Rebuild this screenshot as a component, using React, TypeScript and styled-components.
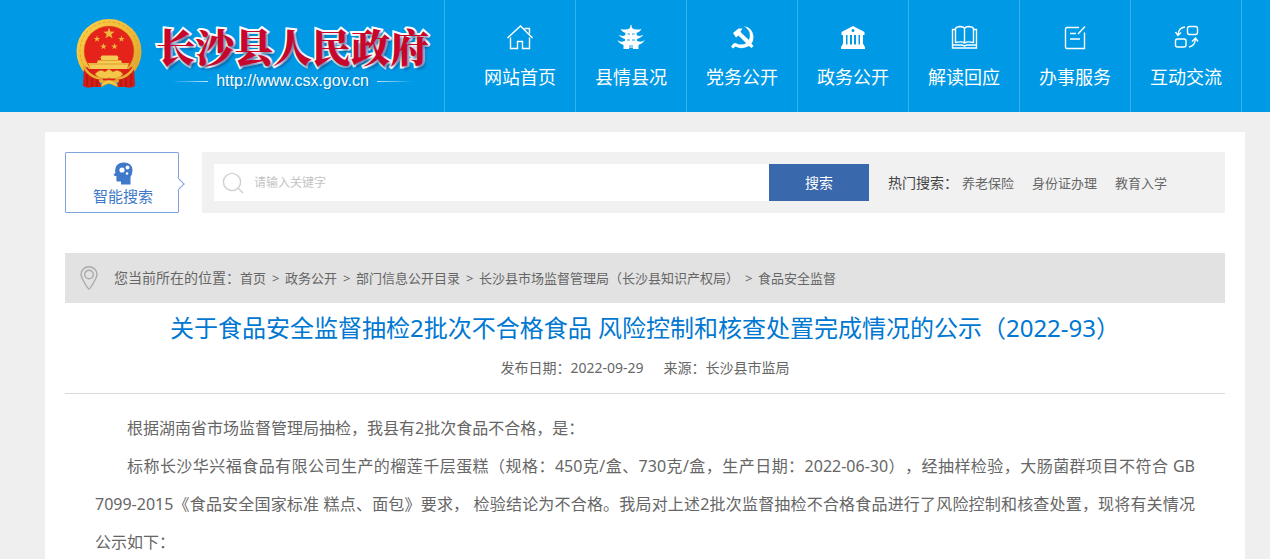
import React from "react";
import styled, { createGlobalStyle } from "styled-components";

const GlobalStyle = createGlobalStyle`
  *, *::before, *::after { box-sizing: border-box; }
  body {
    margin: 0;
    background: #efefef;
    color: #666;
    font: 14px/20px "Noto Sans", "Noto Sans CJK SC", sans-serif;
    text-spacing-trim: space-all;
  }
  a { color: inherit; text-decoration: none; }
`;

const Header = styled.header`
  display: flex;
  justify-content: space-between;
  height: 112px;
  padding: 0 28px 0 75px;
  background: #0099e5;
  color: #fff;
`;

const Brand = styled.a`
  display: flex;
  align-items: flex-start;
  gap: 14px;
  padding-top: 18px;
  white-space: nowrap;
`;

const BrandText = styled.span`
  display: flex;
  flex-direction: column;
  align-items: center;
`;

const SiteName = styled.span`
  color: #c8062c;
  font: 900 39px/54px "Noto Serif CJK SC", "Noto Sans CJK SC", serif;
  -webkit-text-stroke: 4px #fff;
  paint-order: stroke fill;
  text-shadow: 2px 3px 3px rgba(0, 50, 110, 0.6);
`;

const SiteUrl = styled.span`
  display: flex;
  align-items: center;
  gap: 8px;
  font: 16px/18px "Liberation Sans", sans-serif;
  text-shadow: 1px 1px 1px rgba(0, 60, 120, 0.4);
`;

const Rule = styled.i<{ $toRight?: boolean }>`
  width: 36px;
  height: 1px;
  background: linear-gradient(
    ${(p) => (p.$toRight ? "to left" : "to right")},
    transparent,
    rgba(255, 255, 255, 0.75)
  );
`;

const Nav = styled.nav`
  display: flex;
  padding-left: 20px;
  border-left: 1px solid #37afeb;
`;

const NavItem = styled.a`
  display: flex;
  flex-direction: column;
  align-items: center;
  gap: 13px;
  width: 111px;
  padding-top: 23px;
  border-right: 1px solid #37afeb;
  font-size: 18px;
  line-height: 26px;
`;

const NavIcon = styled.svg`
  width: 28px;
  height: 28px;
  fill: none;
  stroke: #fff;
  stroke-width: 1.4;
`;

const Panel = styled.main`
  margin: 20px 25px 0 45px;
  padding: 20px 20px 0;
  background: #fff;
`;

const SearchRow = styled.section`
  display: flex;
  gap: 23px;
  height: 61px;
  margin-bottom: 40px;
`;

const SmartSearch = styled.a`
  position: relative;
  display: flex;
  flex-direction: column;
  align-items: center;
  width: 114px;
  padding: 9px 0 0 2px;
  border: 1px solid #7fa3dc;
  border-radius: 1px;
  color: #4079ca;
  font-size: 15px;
  line-height: 22px;

  &::after {
    content: "";
    position: absolute;
    top: 27px;
    right: -5px;
    width: 8px;
    height: 8px;
    border: solid #7fa3dc;
    border-width: 1px 1px 0 0;
    background: #fff;
    transform: rotate(45deg);
  }
`;

const SearchBar = styled.form`
  display: flex;
  flex: 1;
  align-items: center;
  padding: 12px;
  background: #f1f1f1;
  white-space: nowrap;
`;

const Field = styled.label`
  display: flex;
  flex: 0 1 555px;
  align-items: center;
  gap: 10px;
  height: 37px;
  padding-left: 8px;
  background: #fff;
`;

const Keyword = styled.input`
  flex: 1;
  min-width: 0;
  padding: 0;
  border: 0;
  outline: 0;
  background: none;
  font: 12px/20px "Noto Sans", "Noto Sans CJK SC", sans-serif;
  &::placeholder { color: #c4c4c4; }
`;

const SearchButton = styled.button`
  width: 100px;
  height: 37px;
  border: 0;
  background: #3968ac;
  color: #fff;
  font: 14px/20px "Noto Sans", "Noto Sans CJK SC", sans-serif;
`;

const HotLabel = styled.span`
  margin: 0 4px 0 19px;
  color: #444;
`;

const HotLinks = styled.span`
  display: flex;
  gap: 18px;
  font-size: 13px;
`;

const Breadcrumb = styled.nav`
  display: flex;
  align-items: center;
  height: 50px;
  padding-left: 15px;
  background: #e2e2e2;
  white-space: nowrap;
`;

const CrumbLabel = styled.span`
  margin-left: 16px;
`;

const Crumbs = styled.span`
  display: flex;
  gap: 6px;
  font-size: 13px;
`;

const Separator = styled.span`
  width: 7px;
`;

const Title = styled.h1`
  margin: 0;
  color: #0078d2;
  font-size: 24px;
  font-weight: 400;
  line-height: 50px;
  text-align: center;
`;

const Meta = styled.div`
  display: flex;
  justify-content: center;
  gap: 20px;
  padding: 5px 0 15px;
  border-bottom: 1px solid #dadada;
`;

const Article = styled.article`
  padding: 15px 30px 0;
  font-size: 16px;
  line-height: 38px;
  text-align: justify;

  p {
    margin: 0;
    text-indent: 2em;
  }
`;

const starPath = (cx: number, cy: number, r: number) =>
  Array.from({ length: 10 }, (_, i) => {
    const a = -Math.PI / 2 + (i * Math.PI) / 5;
    const d = i % 2 ? r * 0.4 : r;
    return `${(cx + d * Math.cos(a)).toFixed(2)},${(cy + d * Math.sin(a)).toFixed(2)}`;
  }).join(" ");

const Emblem = () => (
  <svg width="67" height="71" viewBox="0 0 67 71" aria-hidden="true">
    <defs>
      <linearGradient id="gold" x1="0" y1="0" x2="1" y2="1">
        <stop offset="0" stopColor="#ffd24f" />
        <stop offset="0.5" stopColor="#f0bb38" />
        <stop offset="1" stopColor="#d9a02a" />
      </linearGradient>
    </defs>
    <circle cx="34" cy="33.500" r="32.500" fill="url(#gold)" />
    <circle cx="34" cy="33" r="29" fill="none" stroke="#dfa428" strokeWidth="1" strokeDasharray="3 2" />
    <circle cx="34" cy="33" r="25" fill="#e5231b" stroke="#c98012" strokeWidth="0.500" />
    <g fill="#eeb93c">
      <polygon points={starPath(34, 15.5, 6)} />
      <polygon points={starPath(22, 21, 3.4)} />
      <polygon points={starPath(46.5, 21, 3.4)} />
      <polygon points={starPath(28.5, 28.5, 3.4)} />
      <polygon points={starPath(39.5, 28.5, 3.4)} />
    </g>
    <path d="M27 37.500 H42 L44 40 H43 V42 H46 L47 45 H54 L52 51 H16 L13 45 H22 L23 42 H26 V40 H25Z" fill="#f6cb55" />
    <path d="M23 42.500 H46 M15 46 H53" stroke="#d9911f" strokeWidth="0.800" />
    <path d="M14 51 H54 Q50 62 34 63 Q18 62 14 51Z" fill="#df1f18" />
    <path d="M9 49 Q12 48 15 52 Q19 57 26 58 L24 63 L27 69 H17 Q13 71 8 68Z M59 49 Q56 48 53 52 Q49 57 42 58 L44 63 L41 69 H51 Q55 71 60 68Z" fill="#d51d17" />
    <path d="M12 53 V68 M17 57 V69 M22 60 V69 M56 53 V68 M51 57 V69 M46 60 V69" stroke="#a31311" strokeWidth="1" />
    <path d="M8 45 Q15 59 27 59 L28 62 Q15 62 8 50Z M60 45 Q53 59 41 59 L40 62 Q53 62 60 50Z" fill="#e8ae34" />
    <path d="M20 56 Q25 50 30 54 L34 51 L38 54 Q43 50 48 56 Q43 62 34 60 Q25 62 20 56Z M26 69 Q26 63 34 62 Q42 63 43 69 L38 67 Q34 64 30 67Z" fill="#f5c64a" stroke="#cf8a1c" strokeWidth="0.500" />
  </svg>
);

const icons: Record<string, React.ReactNode> = {
  home: (
    <path d="M1.500 15 L14.500 3 L26.500 15 M18.500 5.500 H23.500 V10.500 M4.500 14.500 V25.500 H11.500 V18.500 H16.500 V25.500 H23.500 V14.500" />
  ),
  pagoda: (
    <g fill="#fff" stroke="none">
      <path d="M13.600 2 H14.400 L15 5 Q18 7.500 24.500 6 Q22.500 9.500 19 10 H9 Q5.500 9.500 3.500 6 Q10 7.500 13 5Z" />
      <path d="M8.500 12 H19.500 Q23 14 26.500 11.500 Q24.500 15 20.500 16 H7.500 Q3.500 15 1.500 11.500 Q5 14 8.500 12Z" />
      <path d="M7.500 18 H20.500 Q24 20 28 17 Q26 20.500 21.500 22 H6.500 Q2 20.500 0 17 Q4 20 7.500 18Z" />
      <path d="M8.500 10 H19.500 V12 H8.500Z M8 16 H20 V18 H8Z M12 22 H16 V25 H12Z" opacity="0.550" />
      <path d="M8.500 10 H10.500 V12 H8.500Z M13 10 H15 V12 H13Z M17.500 10 H19.500 V12 H17.500Z M8 16 H10 V18 H8Z M13 16 H15 V18 H13Z M18 16 H20 V18 H18Z M6.500 22 H12 V26 H6.500Z M16 22 H21.500 V26 H16Z" />
    </g>
  ),
  party: (
    <g fill="#fff" stroke="none">
      <path d="M15.500 3 Q25 4.500 25.500 13.500 Q25.500 18 23.500 20.500 L25.500 23 L23.500 25 L21 23 Q14 27 7.500 23.500 L5 25.500 L3 23.500 L5.500 20.500 L7.500 20 Q13 23 18.500 20 Q23 16 21.500 9.500 Q20 5.500 15.500 3Z" />
      <path d="M5 10 L10.500 5.500 H14.500 L12.500 8.500 L13.500 10 L22.500 18.500 L19.500 21.500 L10.500 12.500 L8 14.500Z" />
    </g>
  ),
  bank: (
    <g fill="#fff" stroke="none">
      <path fillRule="evenodd" d="M14 3 L25.500 9 V12 H2.500 V9Z M14 6 A1.500 1.500 0 1 0 14 9 A1.500 1.500 0 1 0 14 6Z" />
      <path d="M4 12 H7 V22 H4Z M8.500 12 H11 V22 H8.500Z M13 12 H15 V22 H13Z M17 12 H19.500 V22 H17Z M21 12 H24 V22 H21Z M3 21.500 H25 V23 L26 23.500 V26 H2 V23.500 L3 23Z" />
    </g>
  ),
  book: (
    <>
      <path d="M5.500 20 V6 Q5.500 4 10 3.500 Q14 3.500 14.500 6 Q15 3.500 19 3.500 Q23.500 4 23.500 6 V20 M14.500 6 V19 M5.500 19.500 Q12 18 14.500 20 Q17 18 23.500 19.500" />
      <path d="M5 6.500 H2.500 V25 H26.500 V6.500 H24 M3 22 H12 L14.500 23 L17 22 H26" />
    </>
  ),
  form: (
    <path d="M18 4.500 H6 Q4.500 4.500 4.500 6 V24 Q4.500 25.500 6 25.500 H23.500 V9.500 M24 3.500 L17 11 M9 10.500 H15 M9 16 H19" />
  ),
  exchange: (
    <>
      <rect x="15.500" y="3.500" width="10" height="8" rx="2" />
      <rect x="3.500" y="16" width="10.500" height="8" rx="2" />
      <path d="M13 4 Q6.500 4.500 6 12 M3.500 9 L6 12.500 L9 9.500 M17 24 Q23 23 23.500 15.500 M20 18.500 L23.500 15 L26 18.500" />
    </>
  ),
};

const sections = [
  ["home", "网站首页"],
  ["pagoda", "县情县况"],
  ["party", "党务公开"],
  ["bank", "政务公开"],
  ["book", "解读回应"],
  ["form", "办事服务"],
  ["exchange", "互动交流"],
];

const hotWords = ["养老保险", "身份证办理", "教育入学"];

const trail = ["首页", "政务公开", "部门信息公开目录", "长沙县市场监督管理局（长沙县知识产权局）", "食品安全监督"];

export default function App() {
  return (
    <>
      <GlobalStyle />
      <Header>
        <Brand href="#">
          <Emblem />
          <BrandText>
            <SiteName>长沙县人民政府</SiteName>
            <SiteUrl>
              <Rule />
              http://www.csx.gov.cn
              <Rule $toRight />
            </SiteUrl>
          </BrandText>
        </Brand>
        <Nav>
          {sections.map(([icon, label]) => (
            <NavItem key={label} href="#">
              <NavIcon viewBox="0 0 28 28" aria-hidden="true">{icons[icon]}</NavIcon>
              {label}
            </NavItem>
          ))}
        </Nav>
      </Header>

      <Panel>
        <SearchRow>
          <SmartSearch href="#">
            <svg width="20" height="23" viewBox="0 0 20 23" aria-hidden="true">
              <path d="M2 9 Q2 1 10 0.500 Q19 0 19.500 8 Q19.500 12 17.500 15 V22.500 H8 V19.500 H4 Q3 19 3.500 14 H2 L0.500 13 L2.500 10.500Z" fill="#4079ca" />
              <circle cx="9" cy="8" r="2.600" fill="#fff" />
              <circle cx="14.500" cy="5.500" r="1.900" fill="#fff" />
              <circle cx="14" cy="11.500" r="1.300" fill="#fff" />
            </svg>
            智能搜索
          </SmartSearch>
          <SearchBar onSubmit={(e) => e.preventDefault()}>
            <Field>
              <svg width="22" height="22" viewBox="0 0 22 22" fill="none" stroke="#d0d0d0" strokeWidth="1.400" aria-hidden="true">
                <circle cx="10" cy="10" r="8.600" />
                <path d="M16 16 L21 21" />
              </svg>
              <Keyword type="text" placeholder="请输入关键字" aria-label="请输入关键字" />
            </Field>
            <SearchButton type="submit">搜索</SearchButton>
            <HotLabel>热门搜索：</HotLabel>
            <HotLinks>
              {hotWords.map((word) => (
                <a key={word} href="#">{word}</a>
              ))}
            </HotLinks>
          </SearchBar>
        </SearchRow>

        <Breadcrumb>
          <svg width="18" height="24" viewBox="0 0 18 24" fill="none" stroke="#aaa" strokeWidth="1.400" aria-hidden="true">
            <path d="M9 23 Q7.500 22.500 3 14 Q1 10.500 1 8.500 A8 7.800 0 0 1 17 8.500 Q17 10.500 15 14 Q10.500 22.500 9 23Z" />
            <circle cx="9" cy="8.500" r="4.300" />
          </svg>
          <CrumbLabel>您当前所在的位置：</CrumbLabel>
          <Crumbs>
            {trail.map((name, i) => (
              <React.Fragment key={name}>
                {i > 0 && <Separator>&gt;</Separator>}
                <a href="#">{name}</a>
              </React.Fragment>
            ))}
          </Crumbs>
        </Breadcrumb>

        <Title>关于食品安全监督抽检2批次不合格食品 风险控制和核查处置完成情况的公示（2022-93）</Title>
        <Meta>
          <span>发布日期：2022-09-29</span>
          <span>来源：长沙县市监局</span>
        </Meta>
        <Article>
          <p>根据湖南省市场监督管理局抽检，我县有2批次食品不合格，是：</p>
          <p>
            标称长沙华兴福食品有限公司生产的榴莲千层蛋糕（规格：450克/盒、730克/盒，生产日期：2022-06-30），经抽样检验，大肠菌群项目不符合 GB 7099-2015《食品安全国家标准 糕点、面包》要求， 检验结论为不合格。我局对上述2批次监督抽检不合格食品进行了风险控制和核查处置，现将有关情况公示如下：
          </p>
        </Article>
      </Panel>
    </>
  );
}
